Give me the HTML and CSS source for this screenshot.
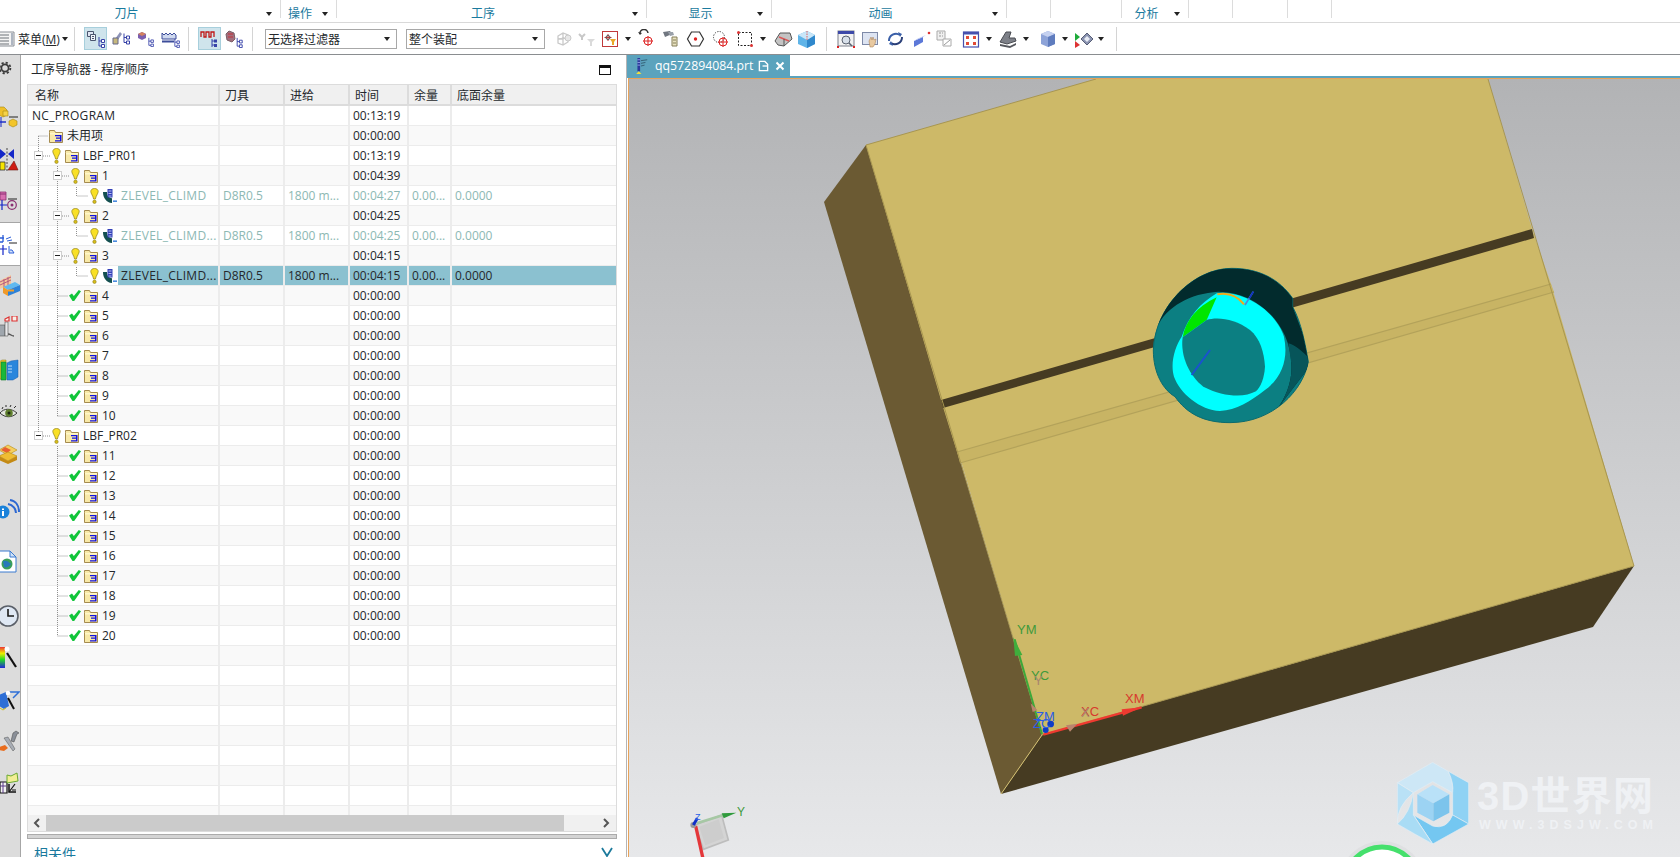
FILE: index.html
```html
<!DOCTYPE html>
<html lang="zh">
<head>
<meta charset="utf-8">
<title>工序导航器</title>
<link rel="stylesheet" href="styles.css">
</head>
<body>
<svg class="defs" width="0" height="0">
  <symbol id="folder" viewBox="0 0 14 14">
    <path d="M.5 3.500V1.500h5l1 2h7v10H.5z" fill="#f8e9a8" stroke="#a58b4f"/>
    <path d="M1 4h12v1.500H1z" fill="#fff6c8"/>
    <path d="M6 6h6.500v6.500H6v-1.300h5V9.800H7V8.600h4V7.300H6z" fill="#1212e0"/>
  </symbol>
  <symbol id="bulb" viewBox="0 0 9 16">
    <path d="M.8 3.500C.8 1.500 2.500.5 4.500.5S8.200 1.500 8.200 3.500C8.200 5.500 5.800 8 5.400 11H3.600C3.200 8 .8 5.500.8 3.500z" fill="#f9e025" stroke="#9c8b22" stroke-width=".8"/>
    <circle cx="4.500" cy="13.800" r="1.700" fill="#d8be18" stroke="#8f8020" stroke-width=".6"/>
  </symbol>
  <symbol id="check" viewBox="0 0 12 11">
    <path d="M0 5.500 3 3.400 4.800 6 9.800 0 12 1.200 5.200 11H3.500z" fill="#11c53a"/>
  </symbol>
  <symbol id="op" viewBox="0 0 14 14">
    <path d="M0 3h4c0 3.500 1.500 5.800 5 6.300V14C3.500 13.500 0 9 0 3z" fill="#134f4f"/>
    <path d="M4.500 0h5V8.500h-5z" fill="#3340b8"/>
    <path d="M5.500 1.500h3v1h-3zM5.500 4h3v1h-3zM5.500 6.500h3v1h-3z" fill="#b9c0f0"/>
    <path d="M10 11.500h4v1.300h-4z" fill="#1f6fd8"/>
  </symbol>
  <symbol id="expander" viewBox="0 0 9 9">
    <rect x=".5" y=".5" width="8" height="8" fill="#fff" stroke="#cfcfcf"/>
    <path d="M2 4.500h5" stroke="#222"/>
  </symbol>
  <symbol id="t-tree" viewBox="0 0 8 12">
    <path d="M2 1v9h3M2 5h3" fill="none" stroke="#3742a8"/>
    <path d="M4.500 3.500h3v3h-3zM4.500 8.500h3v3h-3z" fill="#fff" stroke="#3742a8"/>
  </symbol>
</svg>

<header class="ribbon">
  <div class="rg rg-a"><span class="rg-label">刀片</span><i class="caret caret-wide"></i></div>
  <div class="rg rg-b"><span class="rg-label">操作</span><i class="caret"></i></div>
  <div class="rg rg-c"><span class="rg-label">工序</span><i class="caret"></i></div>
  <div class="rg rg-d"><span class="rg-label">显示</span><i class="caret"></i></div>
  <div class="rg rg-e"><span class="rg-label">动画</span><i class="caret"></i></div>
  <div class="rg rg-f"></div>
  <div class="rg rg-g"></div>
  <div class="rg rg-h"><span class="rg-label">分析</span><i class="caret"></i></div>
  <div class="rg rg-i"></div>
  <div class="rg rg-j"></div>
  <div class="rg rg-k"></div>
  <div class="rg rg-l"></div>
</header>

<nav class="toolbar">
  <svg class="ti s17" viewBox="0 0 17 20"><path d="M-2 3h16v14H-2z" fill="#f4f4f4" stroke="#8a8f96"/><path d="M0 6h9M0 9h9M0 12h9M0 15h9" stroke="#6d7278"/><path d="M11 4h2v12h-2z" fill="#aeb6c2"/></svg>
  <span class="menu-label">菜单(<u>M</u>)</span>
  <i class="caret m3"></i>
  <b class="sep m6"></b>
  <span class="tb-active m9"><svg class="ti" viewBox="0 0 20 20"><path d="M1.500 2.500h6v5h-6z" fill="#dfe6f3" stroke="#4a556e"/><path d="M4.500 5.500h5v6h-5z" fill="#f2f4fa" stroke="#4a556e"/><path d="M6 7.500h2M6 9.500h2" stroke="#4a556e"/><use href="#t-tree" x="11" y="7" width="8" height="12"/></svg></span>
  <svg class="ti s25" viewBox="0 0 25 20"><path d="M6 13 13 3l2 2-7 10z" fill="#8d93b8"/><path d="M6 9h5v6H6z" fill="#c6b87c" stroke="#66688a"/><use href="#t-tree" x="15" y="3" width="8" height="13"/></svg>
  <svg class="ti s25" viewBox="0 0 25 20"><path d="M6 5l4-2 4 2v4l-4 2-4-2z" fill="#7a5fb0"/><path d="M6 5l4 2 4-2-4-2z" fill="#d38060"/><use href="#t-tree" x="15" y="8" width="7" height="10"/></svg>
  <svg class="ti s25" viewBox="0 0 25 20"><path d="M5 4l2 2 2-2 2 2 2-2 2 2 2-2 2 2v4H5z" fill="#cfd9ef" stroke="#3d4d9a"/><path d="M5 12.500h12" stroke="#3d4d9a" stroke-width="2"/><use href="#t-tree" x="16" y="9" width="7" height="10"/></svg>
  <b class="sep m6"></b>
  <span class="tb-active m9"><svg class="ti" viewBox="0 0 20 20"><path d="M1 8V3h3v5h2V3h3v5h2V3h3v5" fill="none" stroke="#c01818" stroke-width="1.300"/><path d="M12 10v8M12 12h3M12 16h3" stroke="#3742a8" fill="none"/><path d="M14 10.500h3v3h-3zM14 15h3v3h-3z" fill="#3742a8"/></svg></span>
  <svg class="ti s25" viewBox="0 0 25 20"><path d="M5 5l3-3 5 2 1 6-3 3-5-2z" fill="#a26f7d" stroke="#7a5e66"/><path d="M7 5h5M7 8h5" stroke="#c5333a"/><use href="#t-tree" x="14" y="8" width="8" height="11"/></svg>
  <b class="sep m6"></b>
  <div class="sel sel-a m12"><span>无选择过滤器</span><i class="caret"></i></div>
  <div class="sel sel-b m9"><span>整个装配</span><i class="caret"></i></div>
  <svg class="ti s23 m8" viewBox="0 0 23 20"><path d="M5 7l5-3 5 2v7l-5 3-5-2zM10 4v12M5 10l10-1" fill="none" stroke="#c9c9c9" stroke-width="1.300"/><circle cx="15" cy="9" r="3" fill="#e7e7e7" stroke="#c9c9c9"/></svg>
  <svg class="ti s23" viewBox="0 0 23 20"><path d="M3 5l3 3 3-3M6 8v3" fill="none" stroke="#c8c8c8" stroke-width="2"/><path d="M11 10h8l-3 3v4h-2v-4z" fill="#dadada"/></svg>
  <svg class="ti s23" viewBox="0 0 23 20"><rect x="3.500" y="2.500" width="15" height="15" fill="#fff" stroke="#c03a3a"/><path d="M9 5v7M5.500 8.500h7" stroke="#c03a3a"/><circle cx="9" cy="8.500" r="2" fill="none" stroke="#555"/><path d="M11 10h6l-2 3v3h-2v-3z" fill="#eaa92a"/></svg>
  <i class="caret m3"></i>
  <svg class="ti s25 m2" viewBox="-2 0 25 20"><path d="M5 5a4 4 0 0 1 8-1" fill="none" stroke="#333" stroke-width="1.500"/><path d="M3 3l2 3 2-2z" fill="#333"/><circle cx="13" cy="12" r="4" fill="none" stroke="#d22"/><path d="M13 7v10M8 12h10" stroke="#d22"/></svg>
  <svg class="ti s25" viewBox="-1 0 25 20"><path d="M4 3l7-1 2 3-7 3z" fill="#707680"/><path d="M9 3l5 0 1 3-4 1z" fill="#9aa1aa"/><path d="M13 8h5v9h-5z" fill="#e8e2c0" stroke="#857f58"/><path d="M14 11h3M14 14h3" stroke="#857f58"/></svg>
  <svg class="ti s25" viewBox="0 0 25 20"><path d="M8.500 3h8l4 7-4 7h-8l-4-7z" fill="#fff" stroke="#333" stroke-width="1.200"/><circle cx="12.500" cy="10" r="1.700" fill="#d22"/></svg>
  <svg class="ti s25" viewBox="-1 0 25 20"><circle cx="10" cy="8" r="5.500" fill="none" stroke="#444" stroke-dasharray="1.300 1.300"/><circle cx="14" cy="13" r="4" fill="none" stroke="#d22"/><path d="M14 8v10M9 13h10" stroke="#d22"/></svg>
  <svg class="ti s25" viewBox="0 0 25 20"><rect x="5.500" y="3.500" width="13" height="13" fill="none" stroke="#222" stroke-dasharray="2 1.500"/><circle cx="5.500" cy="3.500" r="1.500" fill="#d33"/><circle cx="18.500" cy="16.500" r="1.500" fill="#d33"/></svg>
  <i class="caret m2"></i>
  <svg class="ti s23 m6" viewBox="0 0 23 20"><path d="M3 12 8 4h10l2 6-8 7-6-1z" fill="#c4c4c4" stroke="#555"/><path d="M7 8l10 4" stroke="#d55" stroke-width="1.500"/><path d="M12 17V10" stroke="#555"/></svg>
  <svg class="ti s23" viewBox="0 0 23 20"><path d="M3 6l9-4 8 4v9l-8 4-9-4z" fill="#5fb4e8"/><path d="M12 11l8-5v9l-8 4z" fill="#3088cc"/><path d="M3 6l9 5 8-5-8-4z" fill="#c9e6f8"/><path d="M12 2v9" stroke="#e06060" stroke-dasharray="1.500 1"/></svg>
  <b class="sep m8"></b>
  <svg class="ti s25 m6" viewBox="-1 0 25 20"><rect x="4" y="2" width="16" height="15" fill="#f2f2f2" stroke="#7a7f8a"/><path d="M4 2h16v3H4z" fill="#3d49a8"/><circle cx="12" cy="11" r="4" fill="#d8e0ea" stroke="#5a6270"/><path d="M15 14l3 3" stroke="#5a6270" stroke-width="1.500"/><path d="M3 18h2M19 18h2" stroke="#d22" stroke-width="2"/></svg>
  <svg class="ti s25" viewBox="-1 0 25 20"><rect x="3.500" y="3.500" width="15" height="12" fill="#dde4f2" stroke="#7e8aa8"/><path d="M10 12l2-4 1 3 1-3 1 3 2-1-1 5-2 3h-3z" fill="#e8c9a0" stroke="#a0764d" stroke-width=".5"/></svg>
  <svg class="ti s25" viewBox="0 0 25 20"><path d="M6 12a7 7 0 0 1 11-6" fill="none" stroke="#3a5fa8" stroke-width="2"/><path d="M19 8a7 7 0 0 1-11 6" fill="none" stroke="#2a3f78" stroke-width="2"/><path d="M15 3l4 2-2 3zM10 17l-4-2 2-3z" fill="#3a5fa8"/></svg>
  <svg class="ti s25" viewBox="-1 0 25 20"><path d="M5 12l9-4v5l-9 5z" fill="#5c78d8"/><path d="M5 12l3-2 9-4-3 2z" fill="#aebbee"/><circle cx="20" cy="4" r="1.300" fill="#d33"/></svg>
  <svg class="ti s23" viewBox="-1 0 23 20"><path d="M3 2h8v9H3z" fill="#f0f0f0" stroke="#aaa"/><path d="M5 4h2M5 7h2M8 4h1M8 7h1" stroke="#999"/><path d="M9 10h8v7H9z" fill="#fff" stroke="#aaa"/><path d="M10 16l6-5" stroke="#999"/></svg>
  <svg class="ti s25 m3" viewBox="0 0 25 20"><rect x="4.500" y="3" width="15" height="15" fill="#fff" stroke="#4650ad" stroke-width="1.200"/><path d="M5 3h14v2.500H5z" fill="#4650ad"/><path d="M7 7h3v3H7zM14 7h3v3h-3zM7 13h3v3H7zM14 13h3v3h-3z" fill="#e24b36"/></svg>
  <i class="caret m2"></i>
  <svg class="ti s25 m4" viewBox="0 0 25 20"><path d="M4 13l6-10h5l-2 6h6l1 3-9 3z" fill="#7d8088" stroke="#4a4c52"/><path d="M4 15l10 2 6-3v2l-6 3-10-2z" fill="#55575d"/></svg>
  <i class="caret m2"></i>
  <svg class="ti s25 m6" viewBox="0 0 25 20"><path d="M6 5l7-3 7 3v10l-7 3-7-3z" fill="#8da3d8"/><path d="M6 5l7 3 7-3-7-3z" fill="#c5d1f0"/><path d="M13 8l7-3v10l-7 3z" fill="#5f7cbe"/></svg>
  <i class="caret m2"></i>
  <svg class="ti s25 m3" viewBox="0 0 25 20"><path d="M4 4l5 4-5 4z" fill="#1eaa3a"/><path d="M4 12l5 4-5 3z" fill="#d33"/><path d="M10 10l6-6 6 6-6 6z" fill="#8a93b0" stroke="#565d76"/><path d="M13 10l3-3 3 3-3 3z" fill="#e8ecf6"/></svg>
  <i class="caret m2"></i>
  <b class="sep m12"></b>
</nav>

<main class="main">
  <aside class="sidebar">
    <div class="sb-gear">
      <svg class="si" viewBox="0 0 20 20"><circle cx="5" cy="10" r="3.600" fill="none" stroke="#3c3c3c" stroke-width="1.700"/><circle cx="5" cy="10" r="5.400" fill="none" stroke="#3c3c3c" stroke-width="1.800" stroke-dasharray="2.200 2.040"/></svg>
    </div>
    <div class="sb-slot"><svg class="si" viewBox="0 0 20 24"><path d="M-1 1h5l3 3v5l-4 2-4-2z" fill="#efc02a" stroke="#a58712" stroke-width=".6"/><path d="M3 5h5v5H3z" fill="#f6d34a" stroke="#a58712" stroke-width=".6"/><path d="M9 11h9" stroke="#222"/><path d="M0 16h6" stroke="#1427c8" stroke-width="1.400"/><path d="M1 11v10" stroke="#1427c8"/><path d="M9 15l4-2 4 2v4l-4 2-4-2z" fill="#f3c52b" stroke="#a58712" stroke-width=".6"/></svg></div>
    <div class="sb-slot"><svg class="si" viewBox="0 0 20 24"><path d="M0 1l6 5-6 5zM14 1 8 6l6 5z" fill="#1427c8"/><path d="M7 0v24" stroke="#444" stroke-dasharray="2 1.500"/><path d="M0 14h5v8H0z" fill="#f6e400" stroke="#333" stroke-width=".8"/><path d="M8 22l6-9 4 9z" fill="#cf1c12" stroke="#6b1a10" stroke-width=".6"/></svg></div>
    <div class="sb-slot"><svg class="si" viewBox="0 0 20 24"><path d="M0 2h6v8H0z" fill="#d76eb0" stroke="#8a2f72" stroke-width=".8"/><path d="M0 4h6" stroke="#8a2f72"/><path d="M8 9h9" stroke="#222"/><path d="M0 15h7M2 10v10" stroke="#1427c8" stroke-width="1.200"/><circle cx="12" cy="15" r="4.300" fill="none" stroke="#8a2f72" stroke-width="1.200"/><circle cx="12" cy="15" r="1.500" fill="#8a2f72"/></svg></div>
    <div class="sb-slot sb-active"><svg class="si" viewBox="0 -2 20 24"><path d="M3 1v7M0 4h4M0 8h3" stroke="#2c5ed8" stroke-width="1.300"/><path d="M6 5l5-2M7 7l5-1" stroke="#2c5ed8"/><path d="M9 9h8" stroke="#222"/><path d="M0 15h7M3 11v10" stroke="#1427c8" stroke-width="1.200"/><path d="M9 12v7h5l-2-3h-2" fill="#d8e6fb" stroke="#2c5ed8"/></svg></div>
    <div class="sb-slot"><svg class="si" viewBox="0 0 20 24"><path d="M-1 7l12-6v10L-1 15z" fill="#f6c79c"/><path d="M0 8l11-5M0 11l11-5M4 5v8M8 3v8" stroke="#b0547c" stroke-width=".9"/><path d="M3 13l12-5 5 3-12 5z" fill="#60b9f0"/><path d="M3 13v6l5 3v-6z" fill="#ef9a2a"/><path d="M8 16l12-5v6L8 22z" fill="#2d82d8"/><path d="M8 16.500h6" stroke="#f4a02a" stroke-width="2"/></svg></div>
    <div class="sb-slot"><svg class="si" viewBox="0 0 20 24"><path d="M-1 9h6v11h-6z" fill="#9fa6ad" stroke="#555" stroke-width=".6"/><path d="M5 6h3v14H5z" fill="#e8e8ea" stroke="#555" stroke-width=".6"/><path d="M8 18c3 0 3 2 6 2" stroke="#555" stroke-width="1.500" fill="none"/><path d="M5 3l4-2v4H5zM12 0h5v5h-5z" fill="#f7f1ea" stroke="#d33" stroke-width="1.200"/></svg></div>
    <div class="sb-slot"><svg class="si" viewBox="0 0 20 24"><path d="M-1 4l3-2h4v19H-1z" fill="#f3c82e" stroke="#8a7a18" stroke-width=".5"/><path d="M1 4h5v18H1z" fill="#19b83b" stroke="#0e7a26" stroke-width=".6"/><path d="M7 5l4-2 7-1v17l-5 3H7z" fill="#2a86dc" stroke="#1a5aa8" stroke-width=".5"/><path d="M8 8h4M8 11h4M8 14h4" stroke="#bcdcf8"/></svg></div>
    <div class="sb-slot"><svg class="si" viewBox="0 0 20 24"><path d="M0 13c4-5 11-5 17 0-5 5-12 5-17 0z" fill="#e4e6e0" stroke="#3a3a3a"/><circle cx="9" cy="13" r="3.800" fill="#5f7f2e"/><circle cx="9" cy="13" r="1.500" fill="#1d2a10"/><path d="M2 9l1-2M6 7l0-2M10 7l1-2M14 8l2-2" stroke="#2c2c2c"/></svg></div>
    <div class="sb-slot"><svg class="si" viewBox="0 0 20 24"><path d="M-1 8 8 3l9 5-9 5z" fill="#f5cf5e" stroke="#b58a10" stroke-width=".6"/><path d="M1 8l6 3 4-3-6-3z" fill="#e85f33"/><path d="M-1 14 8 10l9 4-9 5z" fill="#f0bd33" stroke="#b58a10" stroke-width=".6"/><path d="M-1 14v4l9 4 9-4v-4l-9 5z" fill="#c48a14"/></svg></div>
    <div class="sb-slot sb-tall"><svg class="si" viewBox="0 0 20 24"><circle cx="3" cy="16" r="6.500" fill="#1a82da"/><path d="M2 12.500h2v1.500H2zM2 15h2v5H2z" fill="#fff"/><path d="M8 8c5 1 8 5 8 9M10 4c6 1 9 6 9 12" fill="none" stroke="#2d68d2" stroke-width="2"/></svg></div>
    <div class="sb-slot sb-tall"><svg class="si" viewBox="0 0 20 24"><path d="M-1 1h11l6 6v15H-1z" fill="#fff" stroke="#3a7ad0"/><path d="M10 1v6h6z" fill="#cfe2f8" stroke="#3a7ad0"/><circle cx="7" cy="14" r="5.500" fill="#3a9f5a"/><path d="M3 11c3-1 5 0 8 3-2 3-5 4-7 3z" fill="#2678bb"/></svg></div>
    <div class="sb-slot sb-tall"><svg class="si" viewBox="0 0 20 24"><circle cx="8" cy="12" r="10" fill="#dfe8f4" stroke="#5a5f68" stroke-width="1.600"/><path d="M8 5v7h6" fill="none" stroke="#1a1a1a" stroke-width="1.600"/></svg></div>
    <div class="sb-slot"><svg class="si" viewBox="0 0 20 24"><defs><linearGradient id="rb" x1="0" y1="0" x2="0" y2="1"><stop offset="0" stop-color="#e33"/><stop offset=".3" stop-color="#ee0"/><stop offset=".6" stop-color="#2d2"/><stop offset="1" stop-color="#22d"/></linearGradient></defs><rect x="-1" y="1" width="6" height="21" fill="url(#rb)"/><path d="M7 7l9 14" stroke="#111" stroke-width="2.200"/><circle cx="7" cy="3" r="2.500" fill="#fff"/></svg></div>
    <div class="sb-slot"><svg class="si" viewBox="0 0 20 24"><path d="M-1 7l7-3 3 14-5 3-5-3z" fill="#2e6fd6"/><path d="M8 4h11l-6 6" fill="none" stroke="#2e6fd6" stroke-width="1.500"/><path d="M8 10l6 11" stroke="#111" stroke-width="2"/><circle cx="8" cy="5" r="2.300" fill="#fff"/><path d="M0 20l3 2 3-2" stroke="#d3c020" fill="none"/></svg></div>
    <div class="sb-slot"><svg class="si" viewBox="0 0 20 24"><path d="M13 3l3-2 3 2-2 1-3 8-3-1z" fill="#8a8f98" stroke="#444" stroke-width=".5"/><path d="M4 8l4-1 7 12-2 2z" fill="#a8adb5" stroke="#555" stroke-width=".5"/><path d="M-1 17l6-2 3 3-4 3-5-1z" fill="#e96d1e"/></svg></div>
    <div class="sb-slot"><svg class="si" viewBox="0 0 20 24"><path d="M0 10h7v11H0z" fill="#f3f3f3" stroke="#111" stroke-width="1.200"/><path d="M0 14h6M3 10v11" stroke="#5a3a8a"/><path d="M9 12v8h7" fill="none" stroke="#111" stroke-width="1.500"/><path d="M9 20l6-8M12 18h4" stroke="#111" stroke-width="1.200"/><path d="M7 3l4 1 6-3 1 8-11 2z" fill="#f2ee94" stroke="#6aaa30"/></svg></div>
  </aside>

  <section class="panel">
    <div class="panel-title">
      <span>工序导航器 - 程序顺序</span>
      <i class="restore"></i>
    </div>
    <div class="table">
      <div class="row head">
        <div class="c c-name">名称</div><div class="c">刀具</div><div class="c">进给</div><div class="c">时间</div><div class="c">余量</div><div class="c c-last">底面余量</div>
      </div>
      <div class="body">
        <div class="rows">
          <div class="row"><div class="c c-name root">NC_PROGRAM</div><div class="c"></div><div class="c"></div><div class="c">00:13:19</div><div class="c"></div><div class="c"></div></div>
          <div class="row"><div class="c c-name l-unused"><svg class="i-folder"><use href="#folder"/></svg><span class="nm">未用项</span></div><div class="c"></div><div class="c"></div><div class="c">00:00:00</div><div class="c"></div><div class="c"></div></div>
          <div class="row"><div class="c c-name l1"><svg class="i-exp"><use href="#expander"/></svg><svg class="i-bulb"><use href="#bulb"/></svg><svg class="i-folder"><use href="#folder"/></svg><span class="nm">LBF_PR01</span></div><div class="c"></div><div class="c"></div><div class="c">00:13:19</div><div class="c"></div><div class="c"></div></div>
          <div class="row"><div class="c c-name l2"><svg class="i-exp"><use href="#expander"/></svg><svg class="i-bulb"><use href="#bulb"/></svg><svg class="i-folder"><use href="#folder"/></svg><span class="nm">1</span></div><div class="c"></div><div class="c"></div><div class="c">00:04:39</div><div class="c"></div><div class="c"></div></div>
          <div class="row muted"><div class="c c-name l3"><svg class="i-bulb"><use href="#bulb"/></svg><svg class="i-op"><use href="#op"/></svg><span class="nm nm-op">ZLEVEL_CLIMD</span></div><div class="c">D8R0.5</div><div class="c">1800 m...</div><div class="c">00:04:27</div><div class="c">0.00...</div><div class="c">0.0000</div></div>
          <div class="row"><div class="c c-name l2"><svg class="i-exp"><use href="#expander"/></svg><svg class="i-bulb"><use href="#bulb"/></svg><svg class="i-folder"><use href="#folder"/></svg><span class="nm">2</span></div><div class="c"></div><div class="c"></div><div class="c">00:04:25</div><div class="c"></div><div class="c"></div></div>
          <div class="row muted"><div class="c c-name l3"><svg class="i-bulb"><use href="#bulb"/></svg><svg class="i-op"><use href="#op"/></svg><span class="nm nm-op">ZLEVEL_CLIMD...</span></div><div class="c">D8R0.5</div><div class="c">1800 m...</div><div class="c">00:04:25</div><div class="c">0.00...</div><div class="c">0.0000</div></div>
          <div class="row"><div class="c c-name l2"><svg class="i-exp"><use href="#expander"/></svg><svg class="i-bulb"><use href="#bulb"/></svg><svg class="i-folder"><use href="#folder"/></svg><span class="nm">3</span></div><div class="c"></div><div class="c"></div><div class="c">00:04:15</div><div class="c"></div><div class="c"></div></div>
          <div class="row selected"><div class="c c-name l3"><svg class="i-bulb"><use href="#bulb"/></svg><svg class="i-op"><use href="#op"/></svg><span class="nm nm-op">ZLEVEL_CLIMD...</span></div><div class="c">D8R0.5</div><div class="c">1800 m...</div><div class="c">00:04:15</div><div class="c">0.00...</div><div class="c">0.0000</div></div>
          <div class="row"><div class="c c-name lc"><svg class="i-check"><use href="#check"/></svg><svg class="i-folder"><use href="#folder"/></svg><span class="nm">4</span></div><div class="c"></div><div class="c"></div><div class="c">00:00:00</div><div class="c"></div><div class="c"></div></div>
          <div class="row"><div class="c c-name lc"><svg class="i-check"><use href="#check"/></svg><svg class="i-folder"><use href="#folder"/></svg><span class="nm">5</span></div><div class="c"></div><div class="c"></div><div class="c">00:00:00</div><div class="c"></div><div class="c"></div></div>
          <div class="row"><div class="c c-name lc"><svg class="i-check"><use href="#check"/></svg><svg class="i-folder"><use href="#folder"/></svg><span class="nm">6</span></div><div class="c"></div><div class="c"></div><div class="c">00:00:00</div><div class="c"></div><div class="c"></div></div>
          <div class="row"><div class="c c-name lc"><svg class="i-check"><use href="#check"/></svg><svg class="i-folder"><use href="#folder"/></svg><span class="nm">7</span></div><div class="c"></div><div class="c"></div><div class="c">00:00:00</div><div class="c"></div><div class="c"></div></div>
          <div class="row"><div class="c c-name lc"><svg class="i-check"><use href="#check"/></svg><svg class="i-folder"><use href="#folder"/></svg><span class="nm">8</span></div><div class="c"></div><div class="c"></div><div class="c">00:00:00</div><div class="c"></div><div class="c"></div></div>
          <div class="row"><div class="c c-name lc"><svg class="i-check"><use href="#check"/></svg><svg class="i-folder"><use href="#folder"/></svg><span class="nm">9</span></div><div class="c"></div><div class="c"></div><div class="c">00:00:00</div><div class="c"></div><div class="c"></div></div>
          <div class="row"><div class="c c-name lc"><svg class="i-check"><use href="#check"/></svg><svg class="i-folder"><use href="#folder"/></svg><span class="nm">10</span></div><div class="c"></div><div class="c"></div><div class="c">00:00:00</div><div class="c"></div><div class="c"></div></div>
          <div class="row"><div class="c c-name l1"><svg class="i-exp"><use href="#expander"/></svg><svg class="i-bulb"><use href="#bulb"/></svg><svg class="i-folder"><use href="#folder"/></svg><span class="nm">LBF_PR02</span></div><div class="c"></div><div class="c"></div><div class="c">00:00:00</div><div class="c"></div><div class="c"></div></div>
          <div class="row"><div class="c c-name lc"><svg class="i-check"><use href="#check"/></svg><svg class="i-folder"><use href="#folder"/></svg><span class="nm">11</span></div><div class="c"></div><div class="c"></div><div class="c">00:00:00</div><div class="c"></div><div class="c"></div></div>
          <div class="row"><div class="c c-name lc"><svg class="i-check"><use href="#check"/></svg><svg class="i-folder"><use href="#folder"/></svg><span class="nm">12</span></div><div class="c"></div><div class="c"></div><div class="c">00:00:00</div><div class="c"></div><div class="c"></div></div>
          <div class="row"><div class="c c-name lc"><svg class="i-check"><use href="#check"/></svg><svg class="i-folder"><use href="#folder"/></svg><span class="nm">13</span></div><div class="c"></div><div class="c"></div><div class="c">00:00:00</div><div class="c"></div><div class="c"></div></div>
          <div class="row"><div class="c c-name lc"><svg class="i-check"><use href="#check"/></svg><svg class="i-folder"><use href="#folder"/></svg><span class="nm">14</span></div><div class="c"></div><div class="c"></div><div class="c">00:00:00</div><div class="c"></div><div class="c"></div></div>
          <div class="row"><div class="c c-name lc"><svg class="i-check"><use href="#check"/></svg><svg class="i-folder"><use href="#folder"/></svg><span class="nm">15</span></div><div class="c"></div><div class="c"></div><div class="c">00:00:00</div><div class="c"></div><div class="c"></div></div>
          <div class="row"><div class="c c-name lc"><svg class="i-check"><use href="#check"/></svg><svg class="i-folder"><use href="#folder"/></svg><span class="nm">16</span></div><div class="c"></div><div class="c"></div><div class="c">00:00:00</div><div class="c"></div><div class="c"></div></div>
          <div class="row"><div class="c c-name lc"><svg class="i-check"><use href="#check"/></svg><svg class="i-folder"><use href="#folder"/></svg><span class="nm">17</span></div><div class="c"></div><div class="c"></div><div class="c">00:00:00</div><div class="c"></div><div class="c"></div></div>
          <div class="row"><div class="c c-name lc"><svg class="i-check"><use href="#check"/></svg><svg class="i-folder"><use href="#folder"/></svg><span class="nm">18</span></div><div class="c"></div><div class="c"></div><div class="c">00:00:00</div><div class="c"></div><div class="c"></div></div>
          <div class="row"><div class="c c-name lc"><svg class="i-check"><use href="#check"/></svg><svg class="i-folder"><use href="#folder"/></svg><span class="nm">19</span></div><div class="c"></div><div class="c"></div><div class="c">00:00:00</div><div class="c"></div><div class="c"></div></div>
          <div class="row"><div class="c c-name lc"><svg class="i-check"><use href="#check"/></svg><svg class="i-folder"><use href="#folder"/></svg><span class="nm">20</span></div><div class="c"></div><div class="c"></div><div class="c">00:00:00</div><div class="c"></div><div class="c"></div></div>
          <div class="row"><div class="c c-name"></div><div class="c"></div><div class="c"></div><div class="c"></div><div class="c"></div><div class="c"></div></div>
          <div class="row"><div class="c c-name"></div><div class="c"></div><div class="c"></div><div class="c"></div><div class="c"></div><div class="c"></div></div>
          <div class="row"><div class="c c-name"></div><div class="c"></div><div class="c"></div><div class="c"></div><div class="c"></div><div class="c"></div></div>
          <div class="row"><div class="c c-name"></div><div class="c"></div><div class="c"></div><div class="c"></div><div class="c"></div><div class="c"></div></div>
          <div class="row"><div class="c c-name"></div><div class="c"></div><div class="c"></div><div class="c"></div><div class="c"></div><div class="c"></div></div>
          <div class="row"><div class="c c-name"></div><div class="c"></div><div class="c"></div><div class="c"></div><div class="c"></div><div class="c"></div></div>
          <div class="row"><div class="c c-name"></div><div class="c"></div><div class="c"></div><div class="c"></div><div class="c"></div><div class="c"></div></div>
          <div class="row"><div class="c c-name"></div><div class="c"></div><div class="c"></div><div class="c"></div><div class="c"></div><div class="c"></div></div>
          <div class="row"><div class="c c-name"></div><div class="c"></div><div class="c"></div><div class="c"></div><div class="c"></div><div class="c"></div></div>
          <div class="row"><div class="c c-name"></div><div class="c"></div><div class="c"></div><div class="c"></div><div class="c"></div><div class="c"></div></div>
        </div>
        <svg class="tree-lines" viewBox="28 105 190 710" width="190" height="710">
          <path d="M38.500 135V150M38.500 160V431M38.500 135H48M43 155H50M43 435H50
                   M57.500 165V170M57.500 180V210M57.500 220V250M57.500 260V415
                   M62 175H69M62 215H69M62 255H69
                   M57.500 295H68M57.500 315H68M57.500 335H68M57.500 355H68M57.500 375H68M57.500 395H68M57.500 415H68
                   M57.500 445V635
                   M57.500 455H68M57.500 475H68M57.500 495H68M57.500 515H68M57.500 535H68M57.500 555H68M57.500 575H68M57.500 595H68M57.500 615H68M57.500 635H68
                   M76.500 186V195H88M76.500 226V235H88M76.500 266V275H88" fill="none" stroke="#909090" stroke-dasharray="1 1"/>
        </svg>
      </div>
      <div class="hscroll">
        <svg class="sarrow" viewBox="0 0 8 10"><path d="M6 1 2 5l4 4" fill="none" stroke="#555" stroke-width="2"/></svg>
        <div class="thumb"></div>
        <svg class="sarrow" viewBox="0 0 8 10"><path d="M2 1l4 4-4 4" fill="none" stroke="#555" stroke-width="2"/></svg>
      </div>
    </div>
    <div class="splitter"></div>
    <div class="related">
      <span>相关件</span>
      <svg class="chev" viewBox="0 0 12 10"><path d="M1 1l5 8 5-8" fill="none" stroke="#1c7a9c" stroke-width="1.800"/></svg>
    </div>
  </section>

  <section class="graphics">
    <div class="tabs">
      <div class="tab">
        <svg class="tab-ico" viewBox="0 0 18 20"><path d="M5 1h3v15H5z" fill="#2b3a9c"/><path d="M5 3h3M5 6h3M5 9h3" stroke="#9aa6e8"/><path d="M9 4l7-1M9 7l5-1M9 10l4-1" stroke="#305a70"/><path d="M6.500 16l-3 3h6z" fill="#f3e03a"/></svg>
        <span class="tab-text">qq572894084.prt</span>
        <svg class="tab-save" viewBox="0 0 12 12"><path d="M1.500 1h6l3 3v7h-9z" fill="none" stroke="#fff" stroke-width="1.500"/><path d="M5 6h5" stroke="#fff" stroke-width="1.500"/></svg>
        <svg class="tab-close" viewBox="0 0 10 10"><path d="M1.500 1.500l7 7M8.500 1.500l-7 7" stroke="#fff" stroke-width="2"/></svg>
      </div>
    </div>
    <div class="viewport">
      <svg class="scene" viewBox="629 79 1051 778" width="1051" height="778">
        <defs>
          <clipPath id="hole-clip"><path d="M160 300C165 170 280 55 395 55C480 55 540 90 578 145V170C605 220 615 280 625 335C610 420 520 518 390 518C310 518 260 490 225 440C190 420 160 370 160 300z"/></clipPath>
        </defs>
        <!-- part -->
        <path d="M866 145 824 202 1001 794 1042 735z" fill="#6b5a33"/>
        <path d="M1042 735 1634 566 1593 627 1001 794z" fill="#463b22"/>
        <path d="M866 145 1096 79H1488L1532 229 1551 284 1634 566 1042 735 961 461 957 452 943 407 941 400z" fill="#cdb968"/>
        <path d="M941 400 1532 229 1534 238 943 408z" fill="#463b22"/>
        <path d="M957 452 1551 284 1554 292 960 463z" fill="#c8b464"/>
        <path d="M957 452 1551 284M960 463 1554 292" stroke="#b3a25a" stroke-width="1.200" fill="none"/>
        <path d="M866 145 1096 79M1488 79 1634 566 1042 735 866 145" stroke="#a89650" fill="none"/>
        <path d="M1042 735 1001 794" stroke="#d4c070" fill="none"/>
        <!-- hole -->
        <g transform="translate(1100 250) scale(.3333)">
          <path d="M160 300C165 170 280 55 395 55C480 55 540 90 578 145V170C605 220 615 280 625 335C610 420 520 518 390 518C310 518 260 490 225 440C190 420 160 370 160 300z" fill="#0c7f82" stroke="#0a6a6e" stroke-width="3"/>
          <g clip-path="url(#hole-clip)">
            <path d="M170 232C190 130 290 55 395 55C480 55 540 90 578 145V170L640 335 528 482C560 440 578 390 574 340C570 220 470 125 355 125C270 130 200 170 170 232z" fill="#022b2d"/>
            <path d="M565 280C590 285 610 310 640 335L528 482C560 440 578 390 574 340z" fill="#07555a"/>
          </g>
          <path d="M350 130C440 120 530 190 552 260C565 320 550 380 495 420C450 455 410 480 360 483C300 480 240 430 222 380C210 340 225 290 245 260C265 200 300 160 350 130z" fill="#00ffff"/>
          <path d="M350 142 320 210 248 262C255 215 290 170 350 142z" fill="#00e600"/>
          <path d="M248 262 320 210C350 200 405 205 450 240C480 265 492 305 495 350C493 385 482 410 468 424C430 445 370 440 310 410C270 380 240 320 248 262z" fill="#0c7f82"/>
          <path d="M275 375 330 300" stroke="#1a52d0" stroke-width="6"/>
          <path d="M352 133C380 128 410 135 432 163" fill="none" stroke="#f2aa1c" stroke-width="6"/>
          <path d="M435 165 460 125" stroke="#4a8ae0" stroke-width="5"/>
          <path d="M448 145 460 125" stroke="#1030c0" stroke-width="5"/>
        </g>
        <!-- WCS triad -->
        <g transform="translate(980 600) scale(.3333)">
          <path d="M186 402 104 118" stroke="#3da83a" stroke-width="6"/>
          <path d="M100 112l27 53-22 3z" fill="#3fae3c"/>
          <path d="M152 310l20 20-14 6z" fill="#b9856e"/>
          <path d="M190 404 485 322" stroke="#ee3a30" stroke-width="7"/>
          <path d="M425 328l60-6-56 25z" fill="#ee3a30"/>
          <path d="M258 376l34-5-22 24z" fill="#b9856e"/>
          <circle cx="212" cy="372" r="10" fill="#0f3cc8"/>
          <circle cx="197" cy="390" r="9" fill="#0f3cc8"/>
        </g>
        <text class="ax ax-g" x="1017" y="634">YM</text>
        <text class="ax ax-g" x="1031" y="680">YC</text>
        <text class="ax ax-br" x="1034" y="685">Y</text>
        <text class="ax ax-r" x="1125" y="703">XM</text>
        <text class="ax ax-r" x="1081" y="716">XC</text>
        <text class="ax ax-br" x="1081" y="717">X</text>
        <text class="ax ax-b" x="1036" y="721">ZM</text>
        <text class="ax ax-b" x="1033" y="728">ZC</text>
        <!-- view triad -->
        <g transform="translate(660 780) scale(.3333)">
          <path d="M105 135 185 105 205 180 130 208z" fill="#d4d4d4" stroke="#bdbdbd" stroke-width="5"/>
          <path d="M118 140 176 118 192 174 136 196z" fill="#cdcdcd"/>
          <path d="M107 138 130 240" stroke="#e4373a" stroke-width="10"/>
          <path d="M110 130 188 106" stroke="#a6c8a4" stroke-width="8"/>
          <path d="M185 100l44-2-38 17z" fill="#2f9a3c"/>
          <circle cx="100" cy="135" r="9" fill="#9a9a9a"/>
          <path d="M100 135 112 115" stroke="#1030c8" stroke-width="9"/>
        </g>
        <text class="mini mini-g" x="737" y="816">Y</text>
        <text class="mini mini-b" x="695" y="820">Z</text>
        <!-- watermark -->
        <g transform="translate(1380 750) scale(.3333)" stroke="#e4edf3" stroke-width="2">
          <path d="M52 98 158 37 205 64Q222 100 218 128L158 95 100 128z" fill="#cde7f6"/>
          <path d="M205 64 266 98V222L218 195V128Q222 100 205 64z" fill="#8fd2f4"/>
          <path d="M266 222 158 282 100 195 158 228Q200 240 218 195z" fill="#74c7f1"/>
          <path d="M158 282 52 222Q90 240 100 195z" fill="#a9dcf5"/>
          <path d="M52 222V98L100 128Q50 170 52 222z" fill="#b9e1f6"/>
          <path d="M52 222Q90 190 100 128V195L158 282Q100 250 52 222z" fill="#a9dcf5"/>
          <path d="M158 105 208 133V188L158 216 112 188V133z" fill="#e6e7e9" stroke="none"/>
          <path d="M158 105 208 133 160 160 112 133z" fill="#b9e1f8" stroke="none"/>
          <path d="M112 133 160 160V214L112 188z" fill="#9cd3f3" stroke="none"/>
          <path d="M208 133V188L160 214V160z" fill="#7cc4ec" stroke="none"/>
        </g>
        <text class="wm wm-a" x="1477" y="810" textLength="176">3D世界网</text>
        <text class="wm wm-b" x="1479" y="829" textLength="174">WWW.3DSJW.COM</text>
        <!-- progress ring -->
        <circle cx="1382" cy="884" r="43" fill="#dfe0e2"/>
        <circle cx="1382" cy="884" r="37" fill="#fff" stroke="#45e06c" stroke-width="5"/>
      </svg>
    </div>
  </section>
</main>
</body>
</html>
```

FILE: styles.css
```css
* { box-sizing: border-box; }
html, body { margin: 0; padding: 0; }
body {
  width: 1680px;
  height: 857px;
  overflow: hidden;
  background: #fff;
  font-family: "Open Sans", "Noto Sans CJK SC", sans-serif;
  font-size: 12px;
  color: #24282c;
  display: flex;
  flex-direction: column;
}
.defs { position: absolute; }

/* ribbon labels */
.ribbon {
  height: 23px;
  flex: none;
  display: flex;
  align-items: flex-start;
  border-bottom: 1px solid #d9d9d9;
}
.rg {
  height: 18px;
  display: flex;
  align-items: center;
  border-right: 1px solid #dcdcdc;
  flex: none;
  padding-top: 9px;
}
.rg-label {
  flex: 1;
  text-align: center;
  color: #1a7a9e;
  font-size: 12px;
  line-height: 12px;
}
.rg-a { width: 281px; }
.rg-b { width: 56px; }
.rg-c { width: 310px; }
.rg-d { width: 125px; }
.rg-e { width: 235px; }
.rg-f { width: 44px; }
.rg-g { width: 71px; }
.rg-h { width: 67px; }
.rg-i { width: 44px; }
.rg-j { width: 55px; }
.rg-k { width: 44px; }
.rg-l { width: 0; border: 0; }

.caret {
  display: block;
  flex: none;
  width: 0;
  height: 0;
  border-left: 3.5px solid transparent;
  border-right: 3.5px solid transparent;
  border-top: 4px solid #222;
}
.rg .caret { margin: 0 8px 0 3px; }
.rg .caret-wide { margin-left: 13px; }

/* toolbar */
.toolbar {
  height: 32px;
  flex: none;
  display: flex;
  align-items: center;
  border-bottom: 1px solid #8a8d90;
}
.ti { display: block; flex: none; width: 20px; height: 20px; }
.s17 { width: 17px; }
.s23 { width: 23px; }
.s25 { width: 25px; }
.m2 { margin-left: 2px; }
.m3 { margin-left: 3px; }
.m4 { margin-left: 4px; }
.m6 { margin-left: 6px; }
.m8 { margin-left: 8px; }
.m9 { margin-left: 9px; }
.m12 { margin-left: 12px; }
.menu-label { margin-left: 1px; width: 41px; white-space: nowrap; }
.menu-label u { text-decoration: underline; }
.sep { display: block; flex: none; width: 1px; height: 24px; background: #d4d4d4; }
.tb-active {
  flex: none;
  width: 23px;
  height: 23px;
  display: flex;
  align-items: center;
  justify-content: center;
  background: #cfe4ec;
  border: 1px solid #a7cfdc;
}
.sel {
  flex: none;
  height: 20px;
  display: flex;
  align-items: center;
  justify-content: space-between;
  padding: 0 6px 0 2px;
  border: 1px solid #a8a8a8;
  white-space: nowrap;
}
.sel-a { width: 132px; }
.sel-b { width: 139px; }

/* main area */
.main { flex: 1; display: flex; min-height: 0; }

.sidebar {
  width: 21px;
  flex: none;
  background: #dcdcdc;
  border-right: 1px solid #a6a6a6;
  display: flex;
  flex-direction: column;
  overflow: hidden;
}
.sb-gear { height: 42px; flex: none; padding-top: 3px; }
.sb-slot {
  height: 42px;
  flex: none;
  display: flex;
  align-items: center;
}
.sb-tall { height: 54px; padding-top: 12px; }
.sb-active {
  height: 44px;
  margin: -1px -1px -1px 0;
  background: #fff;
  border-top: 1px solid #a6a6a6;
  border-bottom: 1px solid #a6a6a6;
  width: 21px;
}
.si { display: block; width: 20px; height: 24px; flex: none; }
.sb-gear .si { height: 20px; }

.panel {
  width: 606px;
  flex: none;
  padding-left: 6px;
  padding-right: 9px;
  border-right: 1px solid #b5b5b5;
  display: flex;
  flex-direction: column;
  overflow: hidden;
}
.panel-title {
  height: 29px;
  flex: none;
  display: flex;
  align-items: center;
  justify-content: space-between;
  padding: 0 6px 2px 4px;
  font-size: 12px;
}
.restore {
  display: block;
  width: 12px;
  height: 10px;
  border: 1px solid #111;
  border-top-width: 3px;
  margin-top: 3px;
}
.table {
  height: 748px;
  flex: none;
  border: 1px solid #dcdcdc;
  display: flex;
  flex-direction: column;
}
.row {
  display: grid;
  grid-template-columns: 192px 65px 65px 59px 43px 1fr;
  height: 20px;
  flex: none;
}
.c {
  display: flex;
  align-items: center;
  padding-left: 3px;
  border-right: 2px solid #ececec;
  border-bottom: 1px solid #ececec;
  white-space: nowrap;
  overflow: hidden;
  line-height: 19px;
}
.c:last-child { border-right: 0; }
.head { height: 21px; background: #f0f0f0; }
.head .c { padding-left: 5px; padding-top: 2px; border-color: #dcdcdc; border-bottom-width: 2px; }
.head .c-name { padding-left: 7px; }
.body { position: relative; height: 709px; flex: none; overflow: hidden; }
.rows > .row:nth-child(even) { background: #f9f9f9; }
.tree-lines { position: absolute; left: 0; top: 0; pointer-events: none; }

.root { padding-left: 4px; letter-spacing: .3px; }
.l-unused { padding-left: 21px; }
.l1 { padding-left: 6px; }
.l2 { padding-left: 25px; }
.l3 { padding-left: 62px; }
.lc { padding-left: 41px; }

.c-name svg { flex: none; display: block; }
.i-exp { width: 9px; height: 9px; margin-right: 9px; }
.i-bulb { width: 9px; height: 16px; margin-right: 4px; }
.i-folder { width: 14px; height: 14px; }
.i-check { width: 12px; height: 11px; margin-right: 3px; }
.i-op { width: 14px; height: 14px; }
.nm { margin-left: 4px; }
.nm-op {
  margin-left: 1px;
  padding-left: 3px;
  flex: 1;
  align-self: stretch;
  letter-spacing: .3px;
}

.muted .c { color: #8db8b3; }
.selected .c { background: #8bc1d0; }
.selected .c-name { background: #fff; }
.selected .nm-op { background: #8bc1d0; }

.hscroll {
  height: 16px;
  flex: none;
  display: flex;
  align-items: center;
  background: #f0f0f0;
}
.sarrow { width: 8px; height: 10px; flex: none; margin: 0 5px 0 5px; }
.thumb { width: 518px; height: 16px; background: #cbcbcb; flex: none; }
.hscroll .sarrow:last-child { margin-left: 38px; }
.splitter {
  height: 5px;
  flex: none;
  margin-top: 2px;
  background: #d4d4d4;
  border: 1px solid #ababab;
}
.related {
  flex: none;
  height: 28px;
  display: flex;
  align-items: center;
  justify-content: space-between;
  padding: 0 4px 0 7px;
  color: #1a7a9e;
  font-size: 14px;
}
.chev { width: 12px; height: 10px; display: block; margin-top: -2px; }

/* graphics */
.graphics { flex: 1; min-width: 0; display: flex; flex-direction: column; }
.tabs { height: 21px; flex: none; display: flex; }
.tab {
  width: 163px;
  display: flex;
  align-items: center;
  background: #5ba3bd;
  color: #fff;
  padding-left: 6px;
}
.tab-ico { width: 16px; height: 18px; display: block; flex: none; }
.tab-text { margin-left: 6px; font-size: 12.3px; width: 100px; white-space: nowrap; }
.tab-save { width: 11px; height: 12px; margin-left: 3px; display: block; flex: none; }
.tab-close { width: 10px; height: 10px; margin-left: 6px; display: block; flex: none; }
.viewport {
  flex: 1;
  position: relative;
  overflow: hidden;
  border-top: 2px solid #5ba3bd;
}
.scene {
  position: absolute;
  left: 2px;
  top: 1px;
  background: linear-gradient(#b2b3b5, #e7e8ea);
  outline: 1px solid #e8a35a;
}

.ax { font-family: "Liberation Sans", sans-serif; font-size: 13px; }
.ax-g { fill: #3f9a3c; }
.ax-r { fill: #d8392e; }
.ax-b { fill: #2a5ee6; }
.ax-br { fill: #a9866f; }
.mini { font-family: "Liberation Sans", sans-serif; font-size: 12px; }
.mini-g { fill: #3f9a3c; }
.mini-b { fill: #2a5ee6; font-size: 9px; }
.wm { fill: #eff1f4; font-weight: 700; font-family: "Liberation Sans", "Noto Sans CJK SC", sans-serif; }
.wm-a { font-size: 40px; }
.wm-b { font-size: 12.5px; }
```
